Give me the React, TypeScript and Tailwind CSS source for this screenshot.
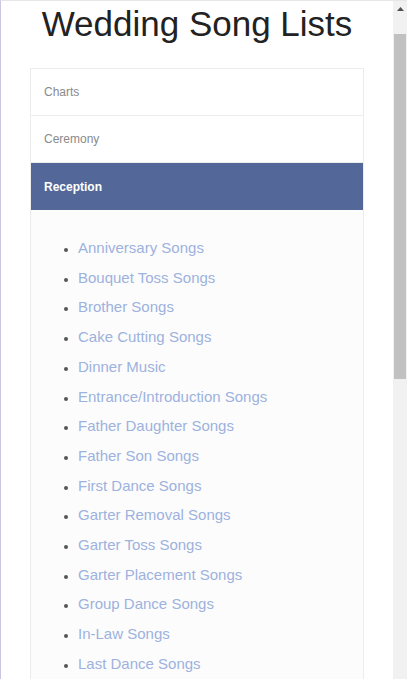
import React from 'react';

const songs = [
  'Anniversary Songs',
  'Bouquet Toss Songs',
  'Brother Songs',
  'Cake Cutting Songs',
  'Dinner Music',
  'Entrance/Introduction Songs',
  'Father Daughter Songs',
  'Father Son Songs',
  'First Dance Songs',
  'Garter Removal Songs',
  'Garter Toss Songs',
  'Garter Placement Songs',
  'Group Dance Songs',
  'In-Law Songs',
  'Last Dance Songs',
];

export default function App() {
  return (
    <div
      className="flex h-[679px] overflow-hidden border-l border-t border-l-[#c9c6e6] border-t-[#e6e6e6] bg-white"
      style={{ fontFamily: '"Liberation Sans", Arial, sans-serif' }}
    >
      <main className="flex-1 overflow-hidden">
        <h1 className="pt-[3px] text-center text-[35px] leading-[40px] text-[#222]">
          Wedding Song Lists
        </h1>

        <div className="mx-[29px] mt-[24px] border border-[#ececec]">
          <div className="flex h-[47px] items-center border-b border-[#ececec] px-[13px] text-[12px] text-[#8a8a8a]">
            Charts
          </div>
          <div className="flex h-[47px] items-center border-b border-[#ececec] px-[13px] text-[12px] text-[#8a8a8a]">
            Ceremony
          </div>
          <div className="flex h-[47px] items-center bg-[#536898] px-[13px] text-[12px] font-bold text-white">
            Reception
          </div>
          <ul className="list-disc bg-[#fcfcfc] pb-4 pl-[47px] pt-[23px] text-[15px] leading-[29.7px] text-[#9db2de] marker:text-[#555] marker:text-[12px]">
            {songs.map((s) => (
              <li key={s}>
                <a href="#">{s}</a>
              </li>
            ))}
          </ul>
        </div>
      </main>

      <div className="flex w-[14px] flex-col bg-[#f1f1f1]">
        <div className="flex h-[16px] items-center justify-center">
          <svg width="7" height="4" viewBox="0 0 7 4">
            <path d="M0 4 L3.5 0 L7 4 Z" fill="#505050" />
          </svg>
        </div>
        <div className="mx-[1px] mt-[17px] h-[345px] bg-[#c1c1c1]" />
      </div>
    </div>
  );
}
